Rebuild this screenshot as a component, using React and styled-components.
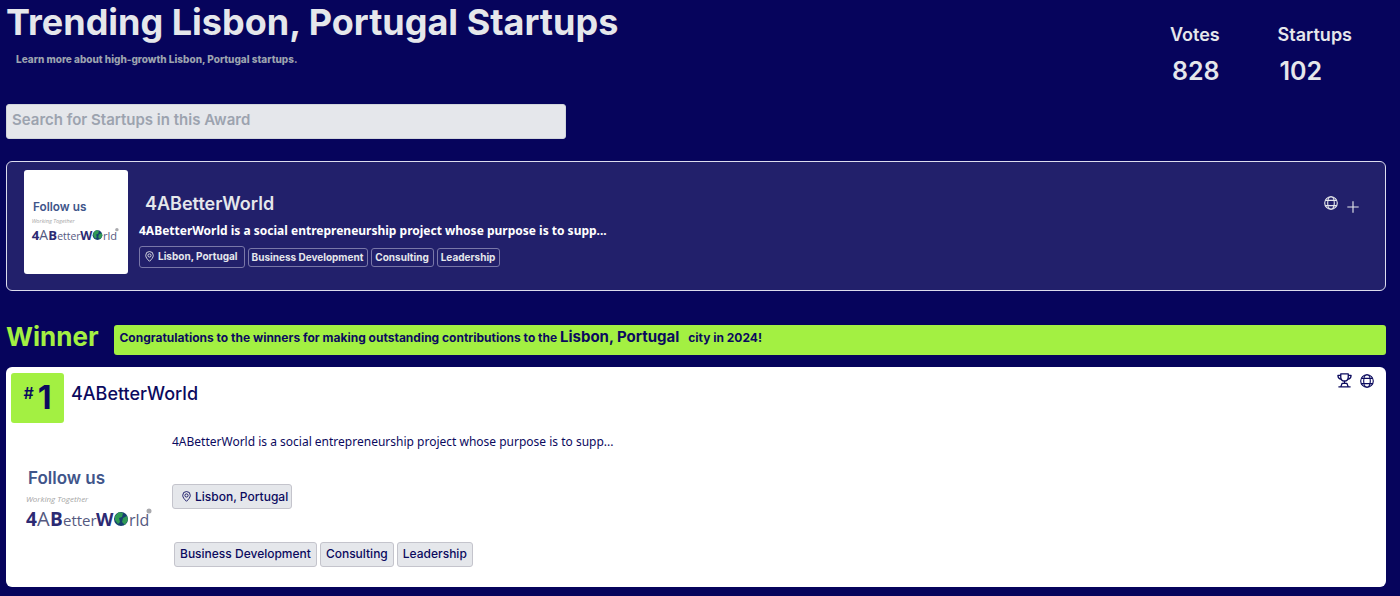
import styled, { createGlobalStyle, ThemeProvider } from "styled-components";

const theme = {
    background: "#06045c",
    panel: "#22206b",
    ink: "#0b0a5e",
    light: "#e5e7eb",
    muted: "#9ca3af",
    accent: "#a3f042",
    heading: "Inter, 'Liberation Sans', sans-serif",
    body: "'Noto Sans', 'Open Sans', sans-serif",
};

const GlobalStyle = createGlobalStyle`
    *, *::before, *::after {
        box-sizing: border-box;
    }
    body {
        margin: 0;
        background-color: ${theme.background};
        font-family: ${theme.heading};
    }
    h1, h2, h3, p, ul, dl, dd {
        margin: 0;
        padding: 0;
    }
`;

const Page = styled.main`
    padding: 0 14px 8px 6px;
`;

const Header = styled.header`
    display: flex;
    justify-content: space-between;
    align-items: flex-start;
    color: ${(props) => props.theme.light};
`;

const Title = styled.h1`
    font-size: 36px;
    line-height: 44px;
    font-weight: 700;
`;

const Subtitle = styled.p`
    padding: 6px 10px 0;
    font-size: 10px;
    line-height: 18px;
    font-weight: 800;
    color: ${(props) => props.theme.muted};
`;

const Stats = styled.dl`
    display: flex;
    gap: 56px;
    padding: 23px 34px 0 0;
`;

const Stat = styled.div`
    dt {
        font-size: 18px;
        line-height: 24px;
        font-weight: 600;
    }
    dd {
        padding: 8px 2px 0;
        font-size: 25px;
        line-height: 32px;
        font-weight: 600;
    }
`;

const Search = styled.input`
    display: block;
    width: 560px;
    max-width: 100%;
    height: 35px;
    margin: 17px 0 22px;
    padding: 0 5px 4px;
    border: 1px solid #d1d5db;
    border-radius: 3px;
    background-color: ${(props) => props.theme.light};
    font: 600 15px ${(props) => props.theme.heading};
    color: ${(props) => props.theme.ink};
    &::placeholder {
        color: ${(props) => props.theme.muted};
        opacity: 1;
    }
`;

const Featured = styled.article`
    display: flex;
    align-items: flex-start;
    gap: 11px;
    padding: 8px 25px 16px 17px;
    border: 1px solid #dcdcee;
    border-radius: 6px;
    background-color: ${(props) => props.theme.panel};
    color: ${(props) => props.theme.light};
`;

const FeaturedBody = styled.div`
    flex: 1;
    padding-top: 22px;
    h3 {
        padding-left: 6px;
        font-size: 18px;
        line-height: 24px;
        font-weight: 600;
    }
    p {
        padding: 4px 0;
        font: 700 12px/22px ${(props) => props.theme.body};
        color: #fff;
    }
`;

const LogoTile = styled.div`
    flex: none;
    width: ${(props) => props.$size}px;
    height: ${(props) => props.$size}px;
    border-radius: 3px;
    background-color: #fff;
    svg {
        display: block;
        width: 100%;
        height: 100%;
    }
`;

const Actions = styled.div`
    display: flex;
    align-items: flex-end;
    gap: 8px;
    padding-top: ${(props) => props.$top || 0}px;
`;

const IconButton = styled.button`
    display: flex;
    padding: 0 0 ${(props) => props.$raise || 0}px;
    border: 0;
    background: none;
    color: inherit;
    cursor: pointer;
`;

const Tags = styled.ul`
    display: flex;
    flex-wrap: wrap;
    align-items: center;
    gap: 3px;
    list-style: none;
`;

const Tag = styled.li`
    display: flex;
    align-items: center;
    gap: 3px;
    height: ${(props) => (props.$place ? 22 : 19)}px;
    padding: ${(props) => (props.$place ? "0 6px 2px 4px" : "0 4px 0 3px")};
    border: 1px solid #7977a8;
    border-radius: 3px;
    font-size: 10px;
    font-weight: 700;
`;

const SolidTag = styled(Tag)`
    height: 25px;
    padding: ${(props) => (props.$place ? "0 3px 0 8px" : "0 5px 2px")};
    border-color: #c4c4cc;
    background-color: ${(props) => props.theme.light};
    font-size: 12px;
    font-weight: 500;
`;

const WinnerRow = styled.div`
    display: flex;
    align-items: center;
    gap: 16px;
    margin: 34px 0 12px;
    h2 {
        padding-bottom: 6px;
        font-size: 26px;
        line-height: 24px;
        font-weight: 700;
        color: ${(props) => props.theme.accent};
    }
`;

const Banner = styled.p`
    flex: 1;
    padding: 0 5px 4px;
    border-radius: 3px;
    background-color: ${(props) => props.theme.accent};
    font-size: 12px;
    line-height: 26px;
    font-weight: 700;
    color: ${(props) => props.theme.ink};
    strong {
        padding-right: 6px;
        font-size: 15px;
        line-height: 24px;
        font-weight: 700;
    }
`;

const WinnerCard = styled.article`
    padding: 6px 12px 12px 5px;
    border-radius: 6px;
    background-color: #fff;
    color: ${(props) => props.theme.ink};
`;

const WinnerTop = styled.div`
    display: flex;
    align-items: flex-start;
    gap: 7px;
    h3 {
        flex: 1;
        padding-top: 9px;
        font-size: 18px;
        line-height: 24px;
        font-weight: 500;
    }
`;

const Rank = styled.div`
    display: flex;
    justify-content: center;
    gap: 4px;
    width: 53px;
    height: 50px;
    border-radius: 3px;
    background-color: ${(props) => props.theme.accent};
    font-size: 32px;
    line-height: 49px;
    font-weight: 700;
    small {
        font-size: 16px;
        line-height: 40px;
        font-weight: 600;
    }
`;

const WinnerMain = styled.div`
    display: flex;
    gap: 7px;
    padding: 2px 0 0 4px;
`;

const WinnerBody = styled.div`
    padding-top: 6px;
    p {
        font: 400 12px/22px ${(props) => props.theme.body};
    }
    ul {
        margin-top: 31px;
    }
    ul:last-child {
        margin-top: 33px;
        padding-left: 2px;
    }
`;

const Icon = ({ size = 14, width = 1.2, children }) => (
    <svg
        width={size}
        height={size}
        viewBox="0 0 16 16"
        fill="none"
        stroke="currentColor"
        strokeWidth={width}
        strokeLinejoin="round"
        aria-hidden="true"
    >
        {children}
    </svg>
);

const Globe = () => (
    <Icon width={1.3}>
        <circle cx="8" cy="8" r="7.2" />
        <ellipse cx="8" cy="8" rx="3.8" ry="7.2" />
        <path d="M1.500 5h13M1.500 11h13" />
    </Icon>
);

const Plus = () => (
    <Icon width={1.3}>
        <path d="M8 1.5v13M1.5 8h13" />
    </Icon>
);

const Pin = () => (
    <Icon size={11} width={1.3}>
        <path d="M8 15C5 12 2.5 9.500 2.500 6.300a5.500 5.500 0 0 1 11 0C13.500 9.500 11 12 8 15z" />
        <circle cx="8" cy="6.500" r="2.300" />
    </Icon>
);

const Trophy = () => (
    <Icon size={15} width={1.4}>
        <path d="M4 1h8v3.500C12 7 10.300 8.500 8 8.500S4 7 4 4.500z" />
        <path d="M4 2.500H1c0 2.500 1 4 3.500 4M12 2.500h3c0 2.500-1 4-3.500 4" />
        <path d="M8 8.500v2M5.500 11h5l1.500 3.800H4zM1.500 14.800h13" />
    </Icon>
);

function Logo() {
    return (
        <svg viewBox="0 0 150 150" role="img" aria-label="4ABetterWorld logo">
            <text x="13" y="59" fontFamily="Inter, sans-serif" fontSize="17" fontWeight="600" fill="#40558a">Follow us</text>
            <text x="11" y="77" fontFamily="'Open Sans', cursive" fontSize="8" fontStyle="italic" fill="#a5a5a5">Working Together</text>
            <g fontFamily="'Open Sans', sans-serif" fontSize="19" fill="#55597f">
                <text x="11" y="101" fontWeight="700" fill="#2c2a73">4</text>
                <text x="22" y="101" fontSize="20">A</text>
                <text x="35" y="101" fontWeight="700" fill="#2c2a73">B</text>
                <text x="48" y="101" fontSize="15">etter</text>
                <text x="81" y="101" fontSize="18" fontWeight="700" fill="#2c2a73">W</text>
                <text x="114" y="101" fontSize="16">rld</text>
            </g>
            <circle cx="106" cy="94" r="7" fill="#16406f" />
            <path d="M100 91l4-4 4 1-1 4-3 1 1 4-2 2-3-4zM108 93l4-2 1 4-3 5-3-3z" fill="#2f9a55" />
            <circle cx="134" cy="86" r="2.500" fill="#a9a9ad" />
        </svg>
    );
}

const categories = ["Business Development", "Consulting", "Leadership"];
const summary = "4ABetterWorld is a social entrepreneurship project whose purpose is to supp...";

export default function App() {
    return (
        <ThemeProvider theme={theme}>
            <GlobalStyle />
            <Page>
                <Header>
                    <div>
                        <Title>Trending Lisbon, Portugal Startups</Title>
                        <Subtitle>Learn more about high-growth Lisbon, Portugal startups.</Subtitle>
                    </div>
                    <Stats>
                        <Stat><dt>Votes</dt><dd>828</dd></Stat>
                        <Stat><dt>Startups</dt><dd>102</dd></Stat>
                    </Stats>
                </Header>
                <Search type="search" aria-label="Search for Startups in this Award" placeholder="Search for Startups in this Award" />
                <Featured>
                    <LogoTile $size={104}><Logo /></LogoTile>
                    <FeaturedBody>
                        <h3>4ABetterWorld</h3>
                        <p>{summary}</p>
                        <Tags>
                            <Tag $place><Pin />Lisbon, Portugal</Tag>
                            {categories.map((name) => <Tag key={name}>{name}</Tag>)}
                        </Tags>
                    </FeaturedBody>
                    <Actions $top={26}>
                        <IconButton aria-label="Website" $raise={4}><Globe /></IconButton>
                        <IconButton aria-label="Add"><Plus /></IconButton>
                    </Actions>
                </Featured>
                <WinnerRow>
                    <h2>Winner</h2>
                    <Banner>
                        Congratulations to the winners for making outstanding contributions to the{" "}
                        <strong>Lisbon, Portugal</strong> city in 2024!
                    </Banner>
                </WinnerRow>
                <WinnerCard>
                    <WinnerTop>
                        <Rank><small>#</small>1</Rank>
                        <h3>4ABetterWorld</h3>
                        <Actions>
                            <Trophy />
                            <IconButton aria-label="Website"><Globe /></IconButton>
                        </Actions>
                    </WinnerTop>
                    <WinnerMain>
                        <LogoTile $size={150}><Logo /></LogoTile>
                        <WinnerBody>
                            <p>{summary}</p>
                            <Tags>
                                <SolidTag $place><Pin />Lisbon, Portugal</SolidTag>
                            </Tags>
                            <Tags>
                                {categories.map((name) => <SolidTag key={name}>{name}</SolidTag>)}
                            </Tags>
                        </WinnerBody>
                    </WinnerMain>
                </WinnerCard>
            </Page>
        </ThemeProvider>
    );
}
